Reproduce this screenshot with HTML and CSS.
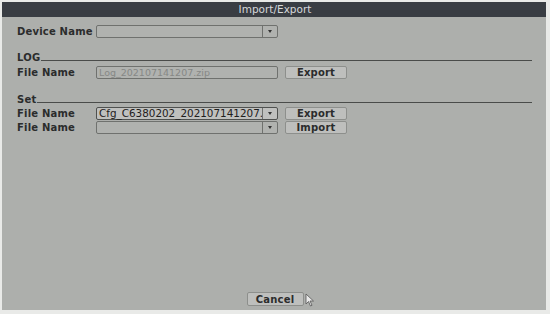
FILE: index.html
```html
<!DOCTYPE html>
<html>
<head>
<meta charset="utf-8">
<link rel="stylesheet" href="styles.css">
</head>
<body>
<div class="window">
  <div class="titlebar">Import/Export</div>
  <div class="content">
    <div class="row">
      <span class="label">Device Name</span>
      <div class="combo"><span class="value"></span><span class="arrow"></span></div>
    </div>
    <div class="section"><span class="sec-title">LOG</span><span class="sec-line"></span></div>
    <div class="row">
      <span class="label">File Name</span>
      <div class="field disabled">Log_202107141207.zip</div>
      <button class="btn">Export</button>
    </div>
    <div class="section set"><span class="sec-title">Set</span><span class="sec-line"></span></div>
    <div class="row">
      <span class="label">File Name</span>
      <div class="combo active"><span class="value">Cfg_C6380202_202107141207.zip</span><span class="arrow"></span></div>
      <button class="btn">Export</button>
    </div>
    <div class="row tight">
      <span class="label">File Name</span>
      <div class="combo"><span class="value"></span><span class="arrow"></span></div>
      <button class="btn">Import</button>
    </div>
  </div>
  <div class="footer">
    <button class="btn cancel">Cancel</button>
    <svg class="cursor" width="11" height="14" viewBox="0 0 11 14"><path d="M1 1 L1 11 L3.5 8.5 L5.5 13 L7 12.3 L5 8 L8.5 8 Z" fill="#e8e8e8" stroke="#555" stroke-width="0.8"/></svg>
  </div>
</div>
</body>
</html>
```
FILE: styles.css
```css
html, body { margin: 0; padding: 0; }
body {
  width: 550px; height: 314px; background: #e9eae8; overflow: hidden;
  font-family: "DejaVu Sans", Verdana, sans-serif;
}
.window {
  margin: 2px 4px 0 2px; height: 308px; background: #adafac;
  display: flex; flex-direction: column;
}
.titlebar {
  height: 15px; background: #393d43; color: #d6d8da;
  font-size: 10.5px; line-height: 15px; text-align: center;
  padding-left: 2px;
}
.content { flex: 1; padding: 8px 16px 0 15px; }
.row { display: flex; align-items: center; height: 13px; }
.row.tight { margin-top: 1px; }
.label { width: 79px; flex: none; font-size: 10px; letter-spacing: 0.2px; font-weight: bold; color: #2b2c2c; }
.combo, .field {
  width: 180px; height: 11px; flex: none; border: 1px solid #6f716e; border-radius: 2px;
  background: #b0b2af; display: flex; font-size: 9.5px; line-height: 11px;
}
.combo .value { flex: 1; min-width: 0; padding-left: 2px; overflow-x: clip; overflow-y: visible; white-space: nowrap; color: #1f2020; }
.combo .arrow {
  width: 14px; flex: none; border-left: 1px solid #6f716e; position: relative;
}
.combo .arrow::after {
  content: ""; position: absolute; left: 5px; top: 4px;
  border-left: 2px solid transparent; border-right: 2px solid transparent; border-top: 3px solid #333;
}
.combo.active { background: #bfc0be; border-color: #4f514f; }
.combo.active .value { font-size: 10.4px; line-height: 10px; }
.field { padding-left: 2px; width: 178px; color: #868886; font-size: 9.5px; }
.btn {
  margin-left: 7px; width: 62px; height: 13px; padding: 0; flex: none;
  border: 1px solid #8d8f8c; border-radius: 2px; background: #bebfbd;
  font-family: "DejaVu Sans", Verdana, sans-serif; font-size: 10px; font-weight: bold;
  color: #2b2c2c; line-height: 11px; letter-spacing: 0.2px;
}
.section { display: flex; align-items: flex-end; margin-top: 14px; margin-bottom: 3px; width: 515px; }
.section.set { margin-top: 15px; margin-bottom: 2px; }
.sec-title { font-size: 10px; letter-spacing: 0.2px; font-weight: bold; color: #2b2c2c; line-height: 11px; }
.sec-line { flex: 1; border-top: 1px solid #4a4c4a; margin-bottom: 2px; margin-left: 1px; }
.footer { height: 24px; display: flex; justify-content: center; align-items: flex-start; padding-left: 2px; position: relative; }
.footer .cancel { margin-left: 0; width: 57px; height: 14px; margin-top: 6px; }
.cursor { position: absolute; left: 303px; top: 7px; }
```
